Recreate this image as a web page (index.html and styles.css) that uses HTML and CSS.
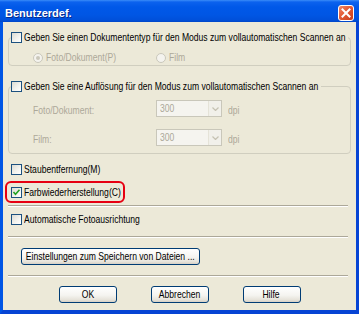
FILE: index.html
```html
<!DOCTYPE html>
<html lang="de">
<head>
    <meta charset="UTF-8">
    <meta name="viewport" content="width=device-width, initial-scale=1.0">
    <title>Benutzerdef.</title>
    <link rel="stylesheet" href="styles.css">
</head>
<body>
    <div class="window">
        <div class="titlebar">
            <span class="title">Benutzerdef.</span>
            <span class="close">
                <svg width="16" height="16" viewBox="0 0 16 16">
                    <defs>
                        <linearGradient id="closeFill" x1="0" y1="0" x2="1" y2="1">
                            <stop offset="0" stop-color="#F08C6C"/>
                            <stop offset="0.45" stop-color="#E35A35"/>
                            <stop offset="1" stop-color="#C63A17"/>
                        </linearGradient>
                    </defs>
                    <rect x="0.5" y="0.5" width="15" height="15" rx="2.5" fill="url(#closeFill)" stroke="#FFFFFF"/>
                    <path d="M4.5 4.5 L11.5 11.5 M11.5 4.5 L4.5 11.5" stroke="#FFFFFF" stroke-width="2" stroke-linecap="square"/>
                </svg>
            </span>
        </div>

        <div class="client">
            <fieldset class="group group-type">
                <legend class="option legend-type"><span class="cb"></span><span class="txt">Geben Sie einen Dokumententyp für den Modus zum vollautomatischen Scannen an</span></legend>
                <div class="choice-grid">
                    <span class="radio-item"><span class="radio on"></span><span class="txt">Foto/Dokument(P)</span></span>
                    <span class="radio-item"><span class="radio"></span><span class="txt">Film</span></span>
                </div>
            </fieldset>

            <fieldset class="group group-res">
                <legend class="option legend-res"><span class="cb"></span><span class="txt">Geben Sie eine Auflösung für den Modus zum vollautomatischen Scannen an</span></legend>
                <div class="res-grid">
                    <span class="txt">Foto/Dokument:</span>
                    <span class="select"><span class="value"><span class="txt">300</span></span><span class="drop"><svg width="7" height="4" viewBox="0 0 7 4"><path d="M0.5 0.5 L3.5 3.5 L6.5 0.5" fill="none" stroke="#C5C2B2" stroke-width="1.2"/></svg></span></span>
                    <span class="unit"><span class="txt">dpi</span></span>

                    <span class="txt">Film:</span>
                    <span class="select"><span class="value"><span class="txt">300</span></span><span class="drop"><svg width="7" height="4" viewBox="0 0 7 4"><path d="M0.5 0.5 L3.5 3.5 L6.5 0.5" fill="none" stroke="#C5C2B2" stroke-width="1.2"/></svg></span></span>
                    <span class="unit"><span class="txt">dpi</span></span>
                </div>
            </fieldset>

            <div class="option row-dust"><span class="cb"></span><span class="txt">Staubentfernung(M)</span></div>

            <div class="option highlight">
                <span class="cb">
                    <svg width="9" height="9" viewBox="0 0 9 9"><path d="M1.5 4 L3.5 6.2 L7.5 1.8" fill="none" stroke="#21A121" stroke-width="1.6"/></svg>
                </span><span class="txt">Farbwiederherstellung(C)</span>
            </div>

            <div class="sep sep-first"></div>

            <div class="option row-rotate"><span class="cb"></span><span class="txt">Automatische Fotoausrichtung</span></div>

            <div class="sep"></div>

            <div class="save-row">
                <button class="btn btn-save"><span class="txt">Einstellungen zum Speichern von Dateien ...</span></button>
            </div>

            <div class="sep"></div>

            <div class="actions">
                <button class="btn btn-action"><span class="txt">OK</span></button>
                <button class="btn btn-action"><span class="txt">Abbrechen</span></button>
                <button class="btn btn-action"><span class="txt">Hilfe</span></button>
            </div>
        </div>
    </div>
</body>
</html>
```

FILE: styles.css
```css
html, body {
    margin: 0;
    padding: 0;
}
body {
    font-family: "Liberation Sans", Arial, sans-serif;
    font-size: 11px;
    line-height: 13px;
    color: #000;
    background: #0055E5;
}
.window {
    width: 359px;
    height: 314px;
    display: flex;
    flex-direction: column;
    overflow: hidden;
}

/* the dialog font is a narrow one: squeeze the text runs */
.txt {
    display: inline-block;
    white-space: nowrap;
    transform: scaleX(0.78);
    transform-origin: 0 50%;
}

/* title bar */
.titlebar {
    height: 22px;
    box-sizing: border-box;
    padding: 4px 5px 0 5px;
    display: flex;
    align-items: center;
    justify-content: space-between;
    background: linear-gradient(#3A8CF8 0, #0C62EE 2px, #0058E8 7px, #0056E4 15px, #0050DA 20px, #0046C8 22px);
}
.title {
    font-weight: bold;
    font-size: 11px;
    color: #FFF;
    text-shadow: 1px 1px 0 #0A2A8A;
}
.close {
    display: flex;
    width: 16px;
    height: 16px;
}

/* dialog area */
.client {
    flex: 1;
    background: #ECE9D8;
    border-left: 3px solid #0055E5;
    border-right: 3px solid #0644D4;
    border-bottom: 4px solid #0644D4;
    display: flex;
    flex-direction: column;
    align-items: flex-start;
}

.option {
    display: flex;
    align-items: center;
    height: 13px;
    white-space: nowrap;
}
.cb {
    flex: none;
    width: 11px;
    height: 11px;
    box-sizing: border-box;
    margin-right: 2px;
    border: 1px solid #1C5180;
    background: linear-gradient(135deg, #DCDBD2, #F4F4F0 60%, #FFFFFF);
    display: flex;
    align-items: center;
    justify-content: center;
}

/* group boxes */
.group {
    align-self: stretch;
    margin: 9px 5px 0 5px;
    padding: 0 0 1px 0;
    border: 1px solid #D0CEBF;
    border-radius: 4px;
    min-width: 0;
}
.group legend {
    margin-left: 2px;
    padding: 0 2px 0 0;
    overflow: visible;
}
.legend-type {
    width: 335px;
}
.legend-res {
    width: 308px;
}
.choice-grid {
    display: grid;
    grid-template-columns: 123px auto;
    margin-top: 7px;
    padding-left: 24px;
    color: #ACA899;
}
.radio-item {
    display: flex;
    align-items: center;
    height: 13px;
    white-space: nowrap;
}
.radio {
    flex: none;
    width: 10px;
    height: 10px;
    box-sizing: border-box;
    border: 1px solid #CAC8BB;
    border-radius: 50%;
    background: #F4F3EE;
    margin-right: 3px;
    display: flex;
    align-items: center;
    justify-content: center;
}
.radio.on::after {
    content: "";
    width: 4px;
    height: 4px;
    border-radius: 50%;
    background: #CAC8BB;
}

.group-res {
    margin-top: 14px;
    padding-bottom: 7px;
}
.res-grid {
    display: grid;
    grid-template-columns: 123px 66px auto;
    row-gap: 12px;
    align-items: end;
    margin-top: 7px;
    padding-left: 24px;
    color: #ACA899;
}
.select {
    height: 17px;
    box-sizing: border-box;
    border: 1px solid #C9C7BA;
    background: #F5F4EF;
    display: flex;
    align-items: stretch;
}
.select .value {
    flex: 1;
    padding-left: 3px;
    line-height: 15px;
}
.drop {
    width: 13px;
    box-sizing: border-box;
    border-left: 1px solid #E5E3D8;
    background: #F1F0EA;
    display: flex;
    align-items: center;
    justify-content: center;
}
.unit {
    margin-left: 6px;
}

/* single options */
.row-dust {
    margin: 9px 0 0 8px;
}
.highlight {
    width: 120px;
    height: 22px;
    box-sizing: border-box;
    margin: 5px 0 0 2px;
    padding: 0 4px 0 4px;
    border: 2px solid #E60012;
    border-radius: 6px;
}
.row-rotate {
    margin: 6px 0 0 8px;
}

.sep {
    align-self: stretch;
    margin: 10px 8px 0 5px;
    border-top: 1px solid #ACA899;
    border-bottom: 1px solid #FFFFFF;
}
.sep-first {
    margin-top: 2px;
}

/* buttons */
.btn {
    font-family: inherit;
    font-size: 11px;
    color: #000;
    height: 17px;
    padding: 0;
    border: 1px solid #003C74;
    border-radius: 3px;
    background: linear-gradient(#FFFFFF, #F5F4F0 55%, #E6E3DA 85%, #D6D0C5);
    line-height: 15px;
    display: flex;
    align-items: center;
    justify-content: center;
    overflow: visible;
}
.btn .txt {
    transform-origin: 50% 50%;
}
.save-row {
    margin: 10px 0 0 18px;
}
.btn-save {
    width: 179px;
}
.actions {
    align-self: stretch;
    display: flex;
    justify-content: center;
    gap: 34px;
    margin-top: 9px;
}
.btn-action {
    width: 58px;
}
```
